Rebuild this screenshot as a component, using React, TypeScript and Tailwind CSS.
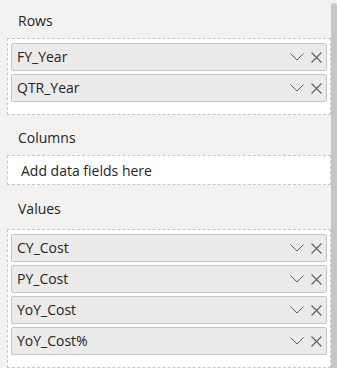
import React from "react";

const ChevronIcon = () => (
  <svg width="14" height="8" viewBox="0 0 14 8" fill="none">
    <path d="M0.5 0.5L7 7L13.5 0.5" stroke="#605e5c" strokeWidth="1" />
  </svg>
);

const CloseIcon = () => (
  <svg width="11" height="11" viewBox="0 0 11 11" fill="none">
    <path d="M0.5 0.5L10.5 10.5M10.5 0.5L0.5 10.5" stroke="#605e5c" strokeWidth="1.1" />
  </svg>
);

const FieldPill = ({ name }: { name: string }) => (
  <div className="flex h-[28px] items-center rounded-[2px] border border-[#c8c6c4] bg-[#edebe9] pl-[5px] pr-[4px]">
    <span className="flex-1 text-[14px] leading-none text-[#252423]">{name}</span>
    <div className="flex items-center gap-[7px]">
      <ChevronIcon />
      <CloseIcon />
    </div>
  </div>
);

const WellLabel = ({ text, className }: { text: string; className: string }) => (
  <div className={`h-[20px] pl-[11px] text-[14px] leading-[20px] text-[#252423] ${className}`}>{text}</div>
);

const FieldWell = ({ fields }: { fields: string[] }) => (
  <div className="flex flex-col gap-[3px] border border-dashed border-[#c8c6c4] bg-white px-[3px] pt-[4px] pb-[12px]">
    {fields.map((f, index) => (
      <FieldPill key={`field_${index}`} name={f} />
    ))}
  </div>
);

export default function App() {
  return (
    <div
      className="flex h-[368px] w-[337px] overflow-hidden bg-[#f3f2f1]"
      style={{ fontFamily: '"Open Sans", "Noto Sans", sans-serif' }}
    >
      <div className="flex w-[331px] flex-col pl-[7px] pt-[11px]">
        <WellLabel text="Rows" className="mb-[7px]" />
        <FieldWell fields={["FY_Year", "QTR_Year"]} />

        <WellLabel text="Columns" className="mt-[13px] mb-[7px]" />
        <div className="flex h-[34px] items-center border border-dashed border-[#c8c6c4] bg-white pl-[13px] text-[14px] text-[#252423]">
          Add data fields here
        </div>

        <WellLabel text="Values" className="mt-[14px] mb-[10px]" />
        <FieldWell fields={["CY_Cost", "PY_Cost", "YoY_Cost", "YoY_Cost%"]} />
      </div>
      <div className="mt-[3px] w-[6px] rounded-t-[3px] bg-[#c8c6c4]" />
    </div>
  );
}
